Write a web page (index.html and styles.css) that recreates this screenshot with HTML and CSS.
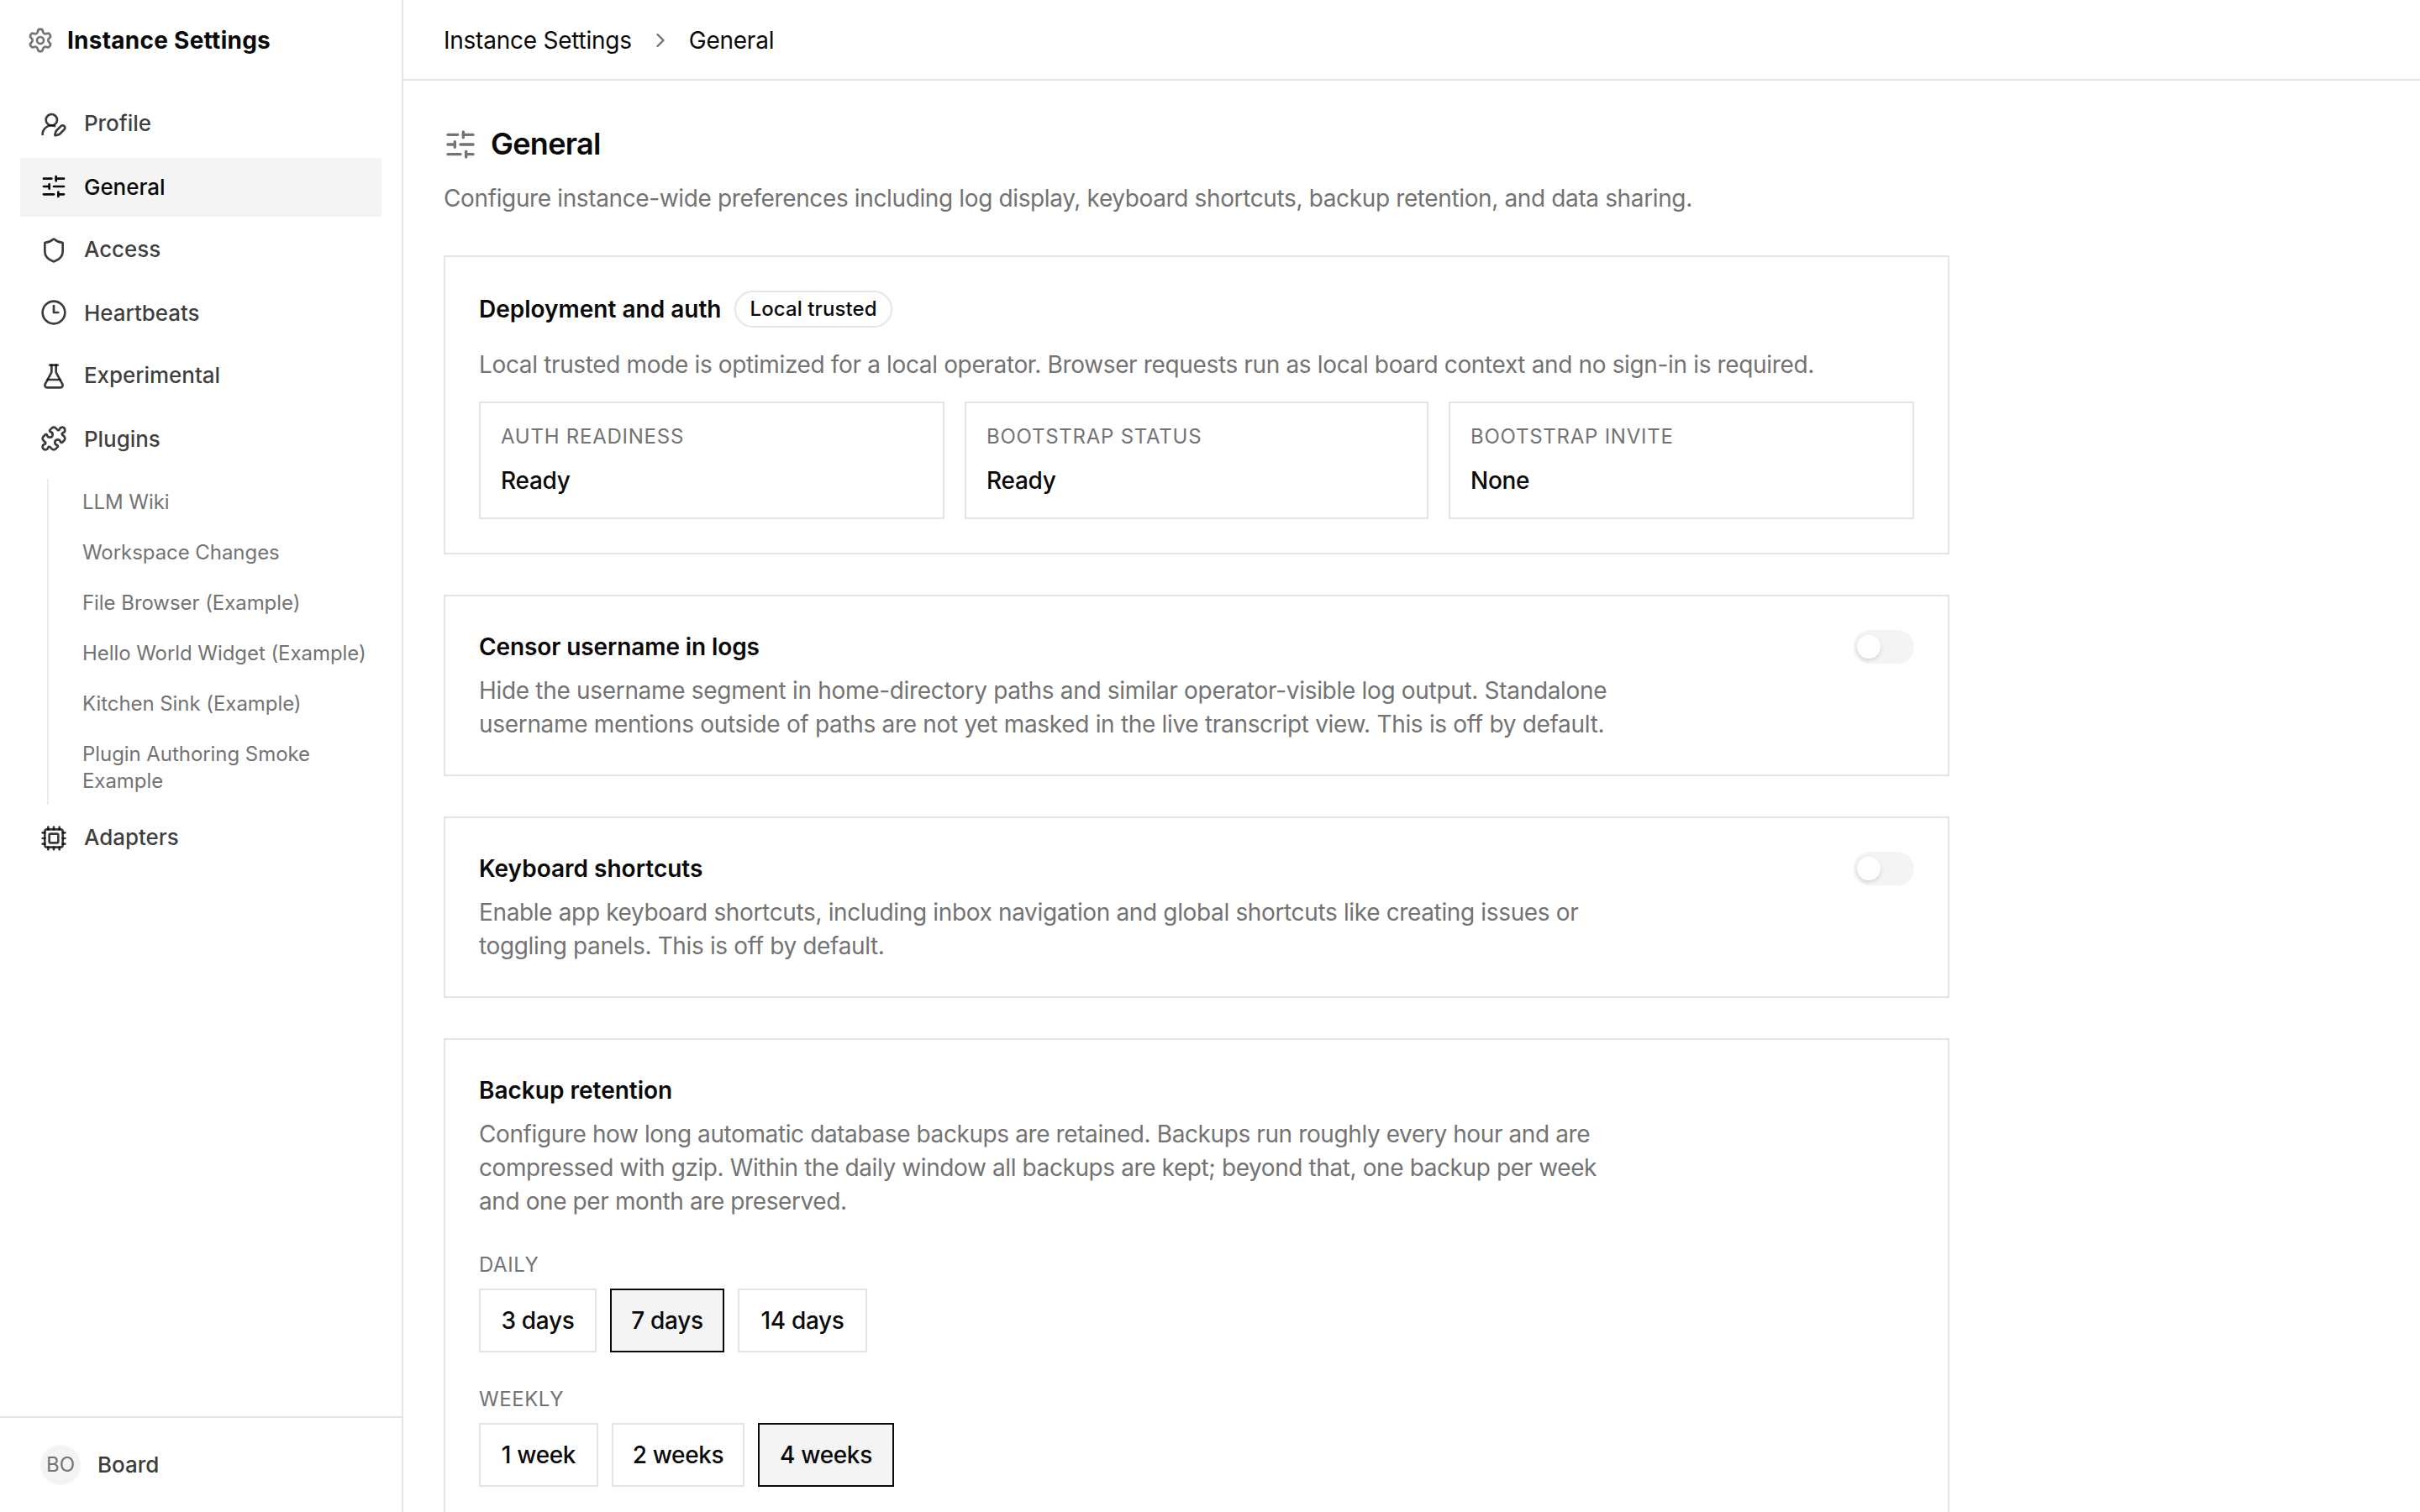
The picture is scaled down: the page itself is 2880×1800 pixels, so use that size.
FILE: index.html
```html
<!DOCTYPE html>
<html lang="en">
<head>
<meta charset="utf-8">
<title>General - Instance Settings</title>
<link rel="stylesheet" href="styles.css">
</head>
<body>
<div class="app">
  <aside class="sidebar">
    <header class="sidebar-head">
      <svg class="icon muted" viewBox="0 0 24 24"><path d="M9.671 4.136a2.34 2.34 0 0 1 4.659 0 2.34 2.34 0 0 0 3.319 1.915 2.34 2.34 0 0 1 2.33 4.033 2.34 2.34 0 0 0 0 3.831 2.34 2.34 0 0 1-2.33 4.033 2.34 2.34 0 0 0-3.319 1.915 2.34 2.34 0 0 1-4.659 0 2.34 2.34 0 0 0-3.32-1.915 2.34 2.34 0 0 1-2.33-4.033 2.34 2.34 0 0 0 0-3.831A2.34 2.34 0 0 1 6.35 6.051a2.34 2.34 0 0 0 3.319-1.915"/><circle cx="12" cy="12" r="3"/></svg>
      <span class="sidebar-title">Instance Settings</span>
    </header>
    <nav class="nav">
      <a class="nav-item"><svg class="icon" viewBox="0 0 24 24"><path d="M2 21a8 8 0 0 1 10.821-7.487"/><path d="M21.378 16.626a1 1 0 0 0-3.004-3.004l-4.01 4.012a2 2 0 0 0-.506.854l-.837 2.87a.5.5 0 0 0 .62.62l2.87-.837a2 2 0 0 0 .854-.506z"/><circle cx="10" cy="8" r="5"/></svg><span>Profile</span></a>
      <a class="nav-item active"><svg class="icon" viewBox="0 0 24 24"><path d="M10 5H3"/><path d="M12 19H3"/><path d="M14 3v4"/><path d="M16 17v4"/><path d="M21 12h-9"/><path d="M21 19h-5"/><path d="M21 5h-7"/><path d="M8 10v4"/><path d="M8 12H3"/></svg><span>General</span></a>
      <a class="nav-item"><svg class="icon" viewBox="0 0 24 24"><path d="M20 13c0 5-3.5 7.5-7.66 8.95a1 1 0 0 1-.67-.01C7.5 20.5 4 18 4 13V6a1 1 0 0 1 1-1c2 0 4.5-1.2 6.24-2.72a1.17 1.17 0 0 1 1.52 0C14.51 3.81 17 5 19 5a1 1 0 0 1 1 1z"/></svg><span>Access</span></a>
      <a class="nav-item"><svg class="icon" viewBox="0 0 24 24"><circle cx="12" cy="12" r="10"/><path d="M12 6v6h4"/></svg><span>Heartbeats</span></a>
      <a class="nav-item"><svg class="icon" viewBox="0 0 24 24"><path d="M14 2v6a2 2 0 0 0 .245.96l5.51 10.08A2 2 0 0 1 18 22H6a2 2 0 0 1-1.755-2.96l5.51-10.08A2 2 0 0 0 10 8V2"/><path d="M6.453 15h11.094"/><path d="M8.5 2h7"/></svg><span>Experimental</span></a>
      <a class="nav-item"><svg class="icon" viewBox="0 0 24 24"><path d="M15.39 4.39a1 1 0 0 0 1.68-.474 2.5 2.5 0 1 1 3.014 3.015 1 1 0 0 0-.474 1.68l1.683 1.682a2.414 2.414 0 0 1 0 3.414L19.61 15.39a1 1 0 0 1-1.68-.474 2.5 2.5 0 1 0-3.014 3.015 1 1 0 0 1 .474 1.68l-1.683 1.682a2.414 2.414 0 0 1-3.414 0L8.61 19.61a1 1 0 0 0-1.68.474 2.5 2.5 0 1 1-3.014-3.015 1 1 0 0 0 .474-1.68l-1.683-1.682a2.414 2.414 0 0 1 0-3.414L4.39 8.61a1 1 0 0 1 1.68.474 2.5 2.5 0 1 0 3.014-3.015 1 1 0 0 1-.474-1.68l1.683-1.682a2.414 2.414 0 0 1 3.414 0z"/></svg><span>Plugins</span></a>
      <div class="subnav">
        <a>LLM Wiki</a>
        <a>Workspace Changes</a>
        <a>File Browser (Example)</a>
        <a>Hello World Widget (Example)</a>
        <a>Kitchen Sink (Example)</a>
        <a>Plugin Authoring Smoke Example</a>
      </div>
      <a class="nav-item"><svg class="icon" viewBox="0 0 24 24"><path d="M12 20v2"/><path d="M12 2v2"/><path d="M17 20v2"/><path d="M17 2v2"/><path d="M2 12h2"/><path d="M2 17h2"/><path d="M2 7h2"/><path d="M20 12h2"/><path d="M20 17h2"/><path d="M20 7h2"/><path d="M7 20v2"/><path d="M7 2v2"/><rect x="4" y="4" width="16" height="16" rx="2"/><rect x="8" y="8" width="8" height="8" rx="1"/></svg><span>Adapters</span></a>
    </nav>
    <footer class="account">
      <span class="avatar">BO</span>
      <span class="account-name">Board</span>
    </footer>
  </aside>
  <div class="main">
    <header class="topbar">
      <span class="crumb">Instance Settings</span>
      <svg class="chevron" viewBox="0 0 24 24"><path d="m9 18 6-6-6-6"/></svg>
      <span class="crumb">General</span>
    </header>
    <main class="content">
      <div class="page-head">
        <div class="page-title">
          <svg class="icon-lg muted" viewBox="0 0 24 24"><path d="M10 5H3"/><path d="M12 19H3"/><path d="M14 3v4"/><path d="M16 17v4"/><path d="M21 12h-9"/><path d="M21 19h-5"/><path d="M21 5h-7"/><path d="M8 10v4"/><path d="M8 12H3"/></svg>
          <h1>General</h1>
        </div>
        <p class="text">Configure instance-wide preferences including log display, keyboard shortcuts, backup retention, and data sharing.</p>
      </div>
      <section class="card deploy">
        <div class="card-title-row">
          <h2>Deployment and auth</h2>
          <span class="badge">Local trusted</span>
        </div>
        <p class="text">Local trusted mode is optimized for a local operator. Browser requests run as local board context and no sign-in is required.</p>
        <div class="stats">
          <div class="stat"><div class="label">Auth readiness</div><div class="value">Ready</div></div>
          <div class="stat"><div class="label">Bootstrap status</div><div class="value">Ready</div></div>
          <div class="stat"><div class="label">Bootstrap invite</div><div class="value">None</div></div>
        </div>
      </section>
      <section class="card setting censor">
        <div class="setting-text">
          <h2>Censor username in logs</h2>
          <p class="text">Hide the username segment in home-directory paths and similar operator-visible log output. Standalone username mentions outside of paths are not yet masked in the live transcript view. This is off by default.</p>
        </div>
        <span class="switch"><span class="thumb"></span></span>
      </section>
      <section class="card setting">
        <div class="setting-text">
          <h2>Keyboard shortcuts</h2>
          <p class="text">Enable app keyboard shortcuts, including inbox navigation and global shortcuts like creating issues or toggling panels. This is off by default.</p>
        </div>
        <span class="switch"><span class="thumb"></span></span>
      </section>
      <section class="card backup">
        <div class="setting-text">
          <h2>Backup retention</h2>
          <p class="text">Configure how long automatic database backups are retained. Backups run roughly every hour and are compressed with gzip. Within the daily window all backups are kept; beyond that, one backup per week and one per month are preserved.</p>
        </div>
        <div class="group">
          <div class="label">Daily</div>
          <div class="options daily">
            <span class="option">3 days</span><span class="option selected">7 days</span><span class="option">14 days</span>
          </div>
        </div>
        <div class="group">
          <div class="label">Weekly</div>
          <div class="options weekly">
            <span class="option">1 week</span><span class="option">2 weeks</span><span class="option selected">4 weeks</span>
          </div>
        </div>
      </section>
    </main>
  </div>
</div>
</body>
</html>
```
FILE: styles.css
```css
* { box-sizing: border-box; margin: 0; padding: 0; }
body {
  background: #fff;
  color: #0a0a0a;
  font-family: Inter, "Liberation Sans", sans-serif;
  font-size: 28px;
  line-height: 40px;
}
svg { flex: none; fill: none; stroke: currentColor; stroke-width: 2; stroke-linecap: round; stroke-linejoin: round; }
.icon { width: 32px; height: 32px; }
.icon-lg { width: 40px; height: 40px; }
.muted { color: #737373; }

.app { display: flex; height: 100vh; overflow: hidden; }

/* Sidebar */
.sidebar { display: flex; flex-direction: column; width: 480px; flex: none; border-right: 2px solid #e5e5e5; }
.sidebar-head { display: flex; align-items: center; gap: 16px; height: 96px; padding: 0 32px; }
.sidebar-title { font-weight: 700; letter-spacing: 0.25px; }
.nav { display: flex; flex-direction: column; gap: 5px; flex: 1; padding: 17px 24px; }
.nav-item { display: flex; align-items: center; gap: 20px; height: 70px; padding: 0 24px; font-size: 26px; font-weight: 500; letter-spacing: -0.06px; color: rgba(10, 10, 10, 0.8); }
.nav-item:nth-child(odd) span,
.nav-item:last-child span,
.nav-item:nth-child(even):not(:last-child) svg { margin-bottom: 2px; }
.nav-item.active { background: #f4f4f4; color: #0a0a0a; }
.subnav { display: flex; flex-direction: column; gap: 4px; margin: 7px 0 0 32px; padding-left: 24px; border-left: 2px solid #ededed; }
.subnav a { padding: 12px 0 12px 16px; font-size: 24px; line-height: 32px; letter-spacing: -0.06px; color: #737373; }
.account { display: flex; align-items: center; gap: 20px; height: 114px; padding: 0 48px; border-top: 2px solid #e5e5e5; font-size: 26px; font-weight: 500; color: #3b3b3b; }
.avatar { display: flex; align-items: center; justify-content: center; width: 48px; height: 48px; border-radius: 50%; background: #f4f4f4; color: #737373; font-size: 24px; font-weight: 400; }

/* Main column */
.main { display: flex; flex-direction: column; flex: 1; min-width: 0; }
.topbar { display: flex; align-items: center; gap: 20px; flex: none; height: 96px; padding: 2px 48px 0; border-bottom: 2px solid #e5e5e5; }
.crumb { letter-spacing: -0.24px; }
.chevron { width: 28px; height: 28px; color: #737373; }
.content { display: flex; flex-direction: column; gap: 48px; width: 1888px; padding: 48px; flex: 1; min-height: 0; overflow: hidden; }
.content > * { flex: none; }
.page-head { display: flex; flex-direction: column; gap: 16px; }
.page-title { display: flex; align-items: center; gap: 16px; }
h1 { padding-bottom: 2px; font-size: 36px; line-height: 54px; font-weight: 600; letter-spacing: -0.7px; }
h2 { font-size: 28px; line-height: 40px; font-weight: 600; }
.text { letter-spacing: -0.355px; color: #737373; }
.page-head .text { letter-spacing: -0.37px; }
.censor .text { letter-spacing: -0.315px; }
.censor h2 { letter-spacing: -0.1px; }
.backup .text { letter-spacing: -0.4px; }

/* Cards */
.card { padding: 40px; border: 2px solid #e5e5e5; }
.deploy { display: flex; flex-direction: column; gap: 24px; }
.card-title-row { display: flex; align-items: center; gap: 16px; }
.badge { height: 44px; padding: 4px 16px; border: 2px solid #e5e5e5; border-radius: 22px; font-size: 24px; line-height: 32px; font-weight: 500; letter-spacing: 0.1px; }
.stats { display: grid; grid-template-columns: 554fr 552fr 554fr; gap: 24px; }
.stat { display: flex; flex-direction: column; gap: 16px; padding: 24px; border: 2px solid #e5e5e5; }
.label { font-size: 24px; line-height: 32px; letter-spacing: 0.75px; text-transform: uppercase; color: #737373; }
.value { font-weight: 500; letter-spacing: -0.3px; }

.setting { display: flex; justify-content: space-between; align-items: flex-start; }
.setting-text { display: flex; flex-direction: column; gap: 12px; max-width: 1344px; }
.switch { display: flex; align-items: center; width: 72px; height: 40px; padding: 0 4px; border-radius: 20px; background: #f4f4f4; }
.thumb { width: 28px; height: 28px; border-radius: 50%; background: #fff; box-shadow: 0 2px 6px rgba(0, 0, 0, 0.1), 0 2px 4px -2px rgba(0, 0, 0, 0.1); }

.backup { display: flex; flex-direction: column; gap: 40px; }
.group { display: flex; flex-direction: column; gap: 12px; }
.group .label { letter-spacing: 0.55px; }
.options { display: flex; gap: 16px; }
.option { padding: 16px 0; border: 2px solid #e5e5e5; font-weight: 500; letter-spacing: -0.35px; text-align: center; white-space: nowrap; }
.daily .option { width: 140px; }
.daily .option:nth-child(2) { width: 136px; }
.daily .option:nth-child(3) { width: 154px; }
.weekly .option { width: 142px; }
.weekly .option:nth-child(2) { width: 158px; }
.weekly .option:nth-child(3) { width: 162px; }
.option.selected { border-color: #0a0a0a; background: #f4f4f4; }
```
